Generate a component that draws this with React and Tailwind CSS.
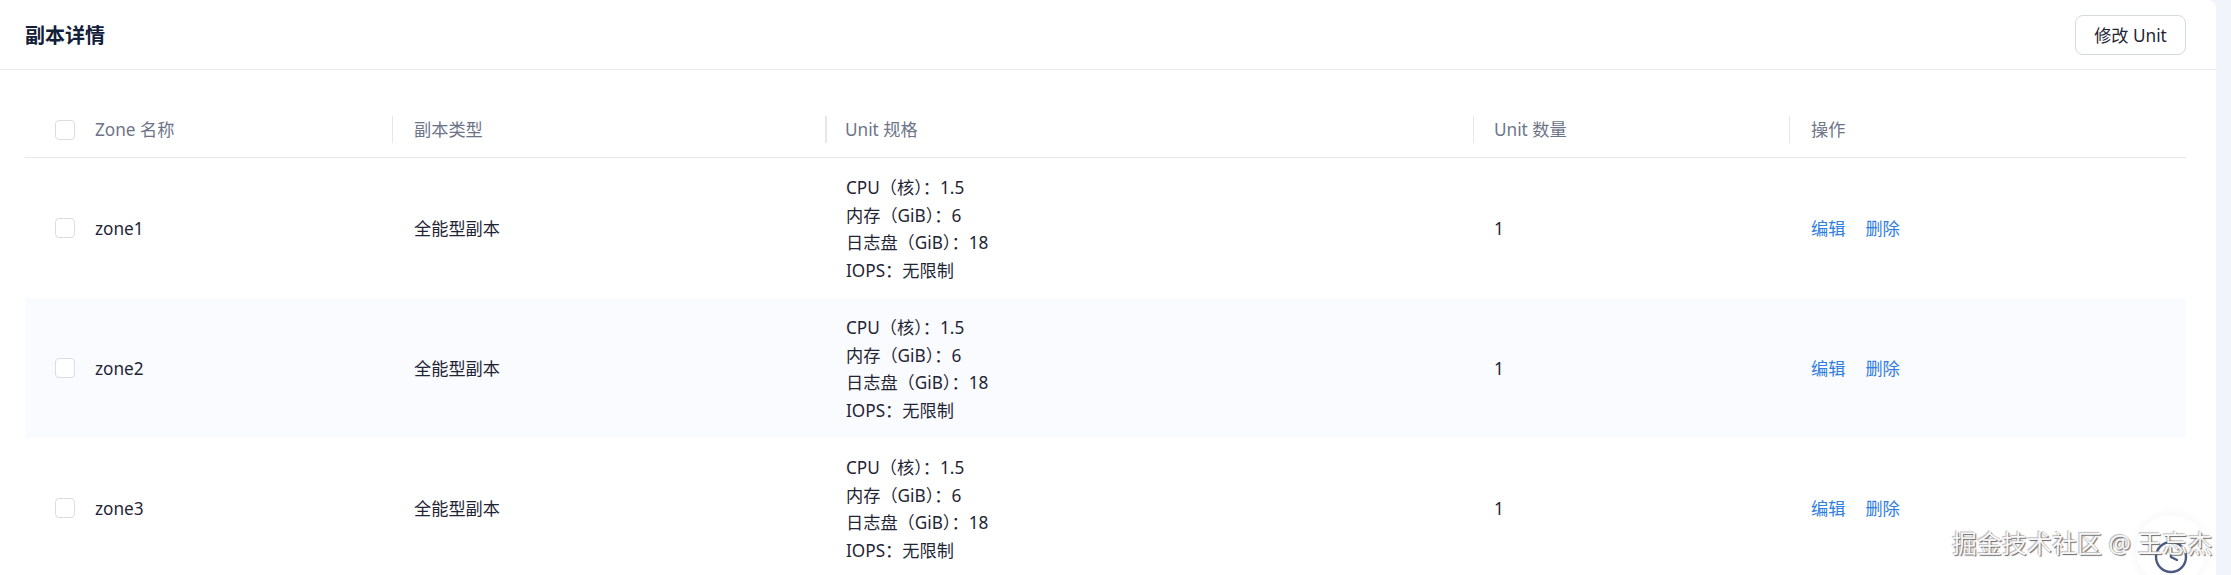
import { Clock } from 'lucide-react';

const zones = ['zone1', 'zone2', 'zone3'];
const gridCols = 'grid grid-cols-[367px_433px_648px_316px_397px]';

const Checkbox = () => (
    <span className="h-5 w-5 shrink-0 rounded border border-[#d9dde5] bg-white" />
);

const HeaderCell = ({ children, first, thick, pad = 'pl-[21px]' }) => (
    <div className={`relative flex items-center ${pad}`}>
        {!first && (
            <span className={`absolute left-0 top-[14px] h-[27px] ${thick ? 'w-[2px] bg-[#e4e7ee]' : 'w-px bg-[#e4e6eb]'}`} />
        )}
        {children}
    </div>
);

const App = () => {
    return (
        <div className="flex h-[575px] w-full overflow-hidden bg-[#f1f5fb] font-['Noto_Sans','Noto_Sans_CJK_SC',sans-serif] text-[17.2px] text-[#1f2535]">
            <div className="relative w-[2216px] rounded-tr-lg bg-white">
                {/* Header */}
                <div className="flex h-[70px] items-center justify-between border-b border-[#e8eaee] pl-[25px] pr-[30px]">
                    <h2 className="pt-[2px] text-[20px] font-semibold text-[#132039]">副本详情</h2>
                    <button className="h-[40px] w-[111px] rounded-lg border border-[#d5d9e0] bg-white pt-[2px] text-[17.2px] text-[#1f2535]">
                        修改 Unit
                    </button>
                </div>

                {/* Table */}
                <div className="pl-[25px] pr-[30px] pt-[32px]">
                    <div className={`${gridCols} h-[56px] border-b border-[#e5e7eb] text-[#6d7487]`}>
                        <div className="flex items-center gap-5 pl-[30px]">
                            <Checkbox />
                            <span>Zone 名称</span>
                        </div>
                        <HeaderCell pad="pl-[22px]">副本类型</HeaderCell>
                        <HeaderCell thick pad="pl-[20px]">Unit 规格</HeaderCell>
                        <HeaderCell>Unit 数量</HeaderCell>
                        <HeaderCell pad="pl-[22px]">操作</HeaderCell>
                    </div>

                    {zones.map((zone, i) => (
                        <div key={zone} className={`${gridCols} h-[140px] ${i === 1 ? 'bg-[#fafbfe]' : 'bg-white'}`}>
                            <div className="flex items-center gap-5 pl-[30px]">
                                <Checkbox />
                                <span className="pt-[2px]">{zone}</span>
                            </div>
                            <div className="flex items-center pl-[22px] pt-[2px]">全能型副本</div>
                            <div className="flex flex-col justify-center pl-[21px] pt-[2px] leading-[27.5px]">
                                <div>CPU（核）：1.5</div>
                                <div>内存（GiB）：6</div>
                                <div>日志盘（GiB）：18</div>
                                <div>IOPS：无限制</div>
                            </div>
                            <div className="flex items-center pl-[21px] pt-[2px]">1</div>
                            <div className="flex items-center gap-[20px] pl-[22px] pt-[2px] text-[#2f7de1]">
                                <a>编辑</a>
                                <a>删除</a>
                            </div>
                        </div>
                    ))}
                </div>

                {/* Floating help button */}
                <div className="absolute left-[2136px] top-[515px] flex h-[70px] w-[70px] items-center justify-center rounded-full bg-white pt-[14px] shadow-[0_0_12px_rgba(30,50,90,0.06)]">
                    <Clock size={36} strokeWidth={1.6} className="text-[#4c5a80]" />
                </div>
            </div>

            {/* Watermark */}
            <div className="absolute left-[1952px] top-[527px] text-[25px] leading-[32px] text-[#f7f7f7] [text-shadow:1px_1px_1px_#666,-1px_-1px_1px_#bbb]">
                掘金技术社区 @ 王忘杰
            </div>
        </div>
    );
};

export default App;
